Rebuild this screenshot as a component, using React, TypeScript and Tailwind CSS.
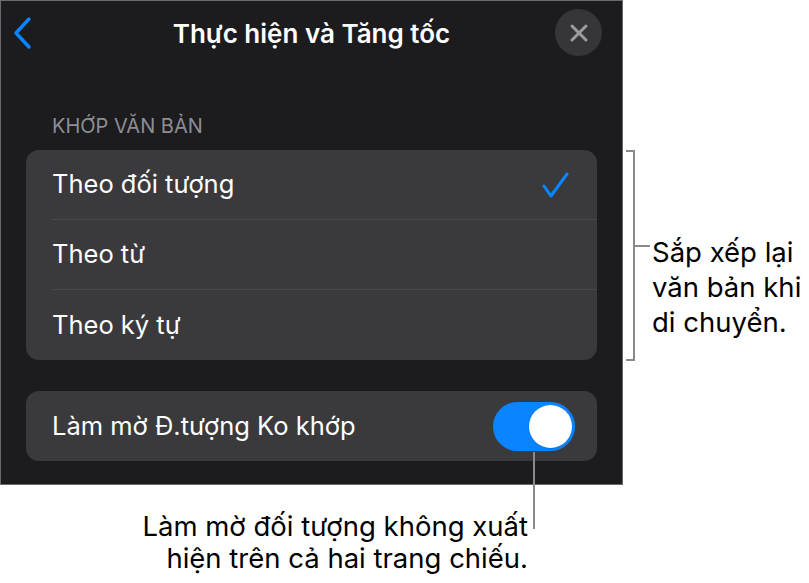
import React from "react";

const font = { fontFamily: "Inter, 'Noto Sans', sans-serif" };

function Row({ label, check, last }: { label: string; check?: boolean; last?: boolean }) {
  return (
    <div className="flex h-[70px] items-center pl-[26px]">
      <div className={`flex h-full flex-1 items-center pr-[28px] ${last ? "" : "border-b border-[#4a4a4d]"}`}>
        <span className="flex-1 text-[25.5px] text-white">{label}</span>
        {check && (
          <svg width="28" height="28" viewBox="0 0 28 28" fill="none">
            <polyline points="3,15 10,25 26,3" stroke="#0a84ff" strokeWidth="3" strokeLinecap="round" strokeLinejoin="round" />
          </svg>
        )}
      </div>
    </div>
  );
}

export default function App() {
  return (
    <div className="relative h-[583px] w-[809px] bg-white" style={font}>
      <div className="flex h-[485px] w-[623px] flex-col border border-[#6a6a6a] bg-[#1c1c1e]">
        <div className="relative flex h-[65px] items-center justify-center">
          <svg className="absolute left-[10px] top-[15px]" width="24" height="34" viewBox="0 0 24 34" fill="none">
            <polyline points="18,3 5,17 18,31" stroke="#0a84ff" strokeWidth="3.5" strokeLinecap="round" strokeLinejoin="round" />
          </svg>
          <span className="text-[26px] font-semibold text-white">Thực hiện và Tăng tốc</span>
          <div className="absolute left-[554px] top-[8px] flex h-[47px] w-[47px] items-center justify-center rounded-full bg-[#363638]">
            <svg width="20" height="20" viewBox="0 0 20 20" fill="none">
              <path d="M3 3 L17 17 M17 3 L3 17" stroke="#9c9ca1" strokeWidth="3" strokeLinecap="round" />
            </svg>
          </div>
        </div>
        <div className="mt-[47px] pl-[51px] text-[20px] leading-[26px] text-[#8d8d93]">KHỚP VĂN BẢN</div>
        <div className="mx-[25px] mt-[11px] flex flex-col rounded-[13px] bg-[#3a3a3c]">
          <Row label="Theo đối tượng" check />
          <Row label="Theo từ" />
          <Row label="Theo ký tự" last />
        </div>
        <div className="mx-[25px] mt-[31px] flex h-[70px] items-center rounded-[13px] bg-[#3a3a3c] pl-[26px] pr-[22px]">
          <span className="flex-1 text-[25.5px] text-white">Làm mờ Đ.tượng Ko khớp</span>
          <div className="flex h-[49px] w-[82px] items-center justify-end rounded-full bg-[#0a84ff] px-[3px]">
            <div className="h-[43px] w-[43px] rounded-full bg-white shadow" />
          </div>
        </div>
      </div>

      {/* right bracket callout */}
      <div className="absolute left-[626px] top-[150px] h-[211px] w-[9px] border-y-2 border-r-2 border-[#8a8a8a]" />
      <div className="absolute left-[634px] top-[245px] h-[2px] w-[16px] bg-[#8a8a8a]" />
      <div className="absolute left-[652px] top-[235px] whitespace-nowrap text-[27.5px] leading-[35px] text-black">
        <div>Sắp xếp lại</div>
        <div>văn bản khi</div>
        <div>di chuyển.</div>
      </div>

      {/* bottom callout */}
      <div className="absolute left-[533px] top-[452px] h-[77px] w-[2px] bg-[#8a8a8a]" />
      <div className="absolute right-[281px] top-[510px] whitespace-nowrap text-right text-[27.5px] leading-[32px] text-black">
        <div>Làm mờ đối tượng không xuất</div>
        <div>hiện trên cả hai trang chiếu.</div>
      </div>
    </div>
  );
}
